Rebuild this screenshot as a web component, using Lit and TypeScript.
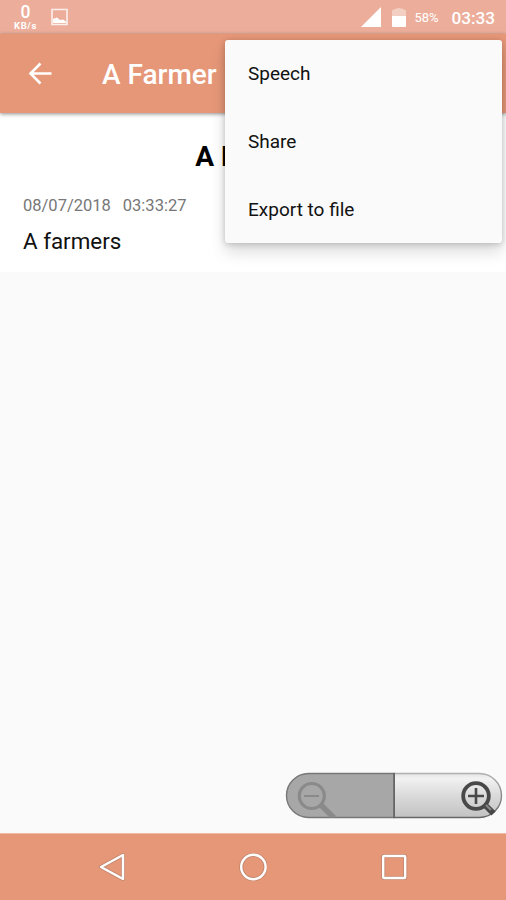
import { LitElement, html, css } from "lit";
import { customElement } from "lit/decorators.js";

@customElement("app-root")
export class AppRoot extends LitElement {
  static styles = css`
    :host { display: flex; flex-direction: column; position: relative; width: 506px; height: 900px; overflow: hidden; background: #fafafa; font-family: Roboto, "Noto Sans", sans-serif; }
    * { box-sizing: border-box; }
    svg { display: block; flex: none; }
    .status { flex: none; height: 34px; background: #ecae9b; color: #fff; display: flex; align-items: center; padding: 0 11px 0 12px; }
    .speed { width: 27px; height: 34px; display: flex; flex-direction: column; align-items: center; padding-top: 4px; }
    .speed b { font-size: 17.5px; line-height: 17px; font-weight: 500; }
    .speed small { font-size: 9.5px; line-height: 9px; font-weight: 700; letter-spacing: .6px; }
    .photo { margin-left: 11px; }
    .signal { margin-left: auto; }
    .battery { margin-left: 11px; }
    .percent { font-size: 13px; letter-spacing: -.1px; margin-left: 9px; line-height: 34px; padding-top: 2px; }
    .clock { font-size: 17.2px; font-weight: 500; margin-left: 13px; line-height: 34px; padding-top: 1px; }
    .bar { flex: none; height: 79px; background: #e69778; color: #fff; display: flex; align-items: center; padding: 2px 0 0 28px; box-shadow: 0 1px 4px rgba(0,0,0,.45); z-index: 1; }
    .back { margin-top: -2px; }
    .bar h1 { margin: 0 0 0 50px; font-size: 28px; font-weight: 500; line-height: 36px; }
    .note { flex: none; height: 159px; background: #fff; padding: 27px 23px 0; color: #111; }
    .note h2 { margin: 0; text-align: center; font-size: 28px; line-height: 34px; font-weight: 700; color: #000; }
    .date { margin-top: 20px; font-size: 16.5px; line-height: 24px; color: #777; display: flex; gap: 12px; }
    .text { margin-top: 9px; font-size: 22.4px; line-height: 28px; }
    .space { flex: 1; display: flex; align-items: flex-end; justify-content: flex-end; padding: 0 3px 14px 0; }
    .nav { flex: none; height: 67px; background: #e69778; border-top: 1px solid #efb9a5; display: flex; justify-content: center; align-items: center; gap: 113px; }
    .menu { position: absolute; z-index: 2; left: 225px; top: 40px; width: 277px; height: 203px; background: #fafafa; border-radius: 3px; box-shadow: 0 9px 16px rgba(0,0,0,.14), 0 1px 6px rgba(0,0,0,.2); color: #111; display: flex; flex-direction: column; }
    .item { flex: 1; display: flex; align-items: center; padding: 0 23px; font-size: 19px; }
  `;

  render() {
    return html`
      <header class="status">
        <div class="speed"><b>0</b><small>KB/s</small></div>
        <svg class="photo" width="19" height="18" viewBox="0 0 19 18"><path d="M2 1.5H17V16.5H2Z" fill="none" stroke="#fff" stroke-opacity=".8" stroke-width="1.6"/><path d="M3 15V11L7 9.5L10 12L13 11.5L16 13.5V15Z" fill="#fff"/></svg>
        <svg class="signal" width="20" height="20" viewBox="0 0 20 20"><path d="M0 20L20 0V20Z" fill="#fff"/></svg>
        <svg class="battery" width="14" height="20" viewBox="0 0 14 20"><path d="M0 9V4Q0 2.5 2 2.5Q4 1 7 1T12 2.5Q14 2.5 14 4V9Z" fill="#fff" fill-opacity=".4"/><path d="M0 9H14V19Q14 20 13 20H1Q0 20 0 19Z" fill="#fff"/></svg>
        <span class="percent">58%</span><span class="clock">03:33</span>
      </header>
      <div class="bar">
        <svg class="back" width="24" height="24" viewBox="0 0 24 24"><path d="M23.5 11.5H3M12.5 1.5L2.5 11.5L12.5 21.5" fill="none" stroke="#fff" stroke-width="2.6"/></svg>
        <h1>A Farmer</h1>
      </div>
      <main class="note">
        <h2>A Farmer</h2>
        <div class="date"><span>08/07/2018</span><span>03:33:27</span></div>
        <div class="text">A farmers</div>
      </main>
      <section class="space">
        <svg width="218" height="47" viewBox="0 0 218 47">
          <defs>
            <linearGradient id="face" x2="0" y2="1"><stop stop-color="#e4e4e4"/><stop offset=".12" stop-color="#f2f2f2"/><stop offset=".5" stop-color="#dadada"/><stop offset="1" stop-color="#c2c2c2"/></linearGradient>
            <linearGradient id="edge" x2="0" y2="1"><stop stop-color="#b0b0b0"/><stop offset="1" stop-color="#666"/></linearGradient>
            <clipPath id="pill"><rect x="1" y="1" width="216" height="44.5" rx="22.2"/></clipPath>
          </defs>
          <path d="M109 1.5H194.5A22 22 0 0 1 194.5 45.5H109Z" fill="url(#face)" stroke="url(#edge)" stroke-width="1.4"/>
          <path d="M109 1.5H23.5A22 22 0 0 0 23.5 45.5H109Z" fill="#a7a7a7" stroke="#777" stroke-width="1.4"/>
          <path d="M109.2 1V46" stroke="#666" stroke-width="1.6"/>
          <g clip-path="url(#pill)" fill="none" stroke="#8a8a8a"><circle cx="26.8" cy="24" r="12.5" stroke-width="3.2"/><path d="M19 24H34" stroke-width="2"/><path d="M36 33L49 46" stroke-width="5.5"/></g>
          <g stroke="#484848" fill="none"><circle cx="191" cy="24" r="12.8" stroke-width="3.8"/><path d="M183 24H199M191 16V32" stroke-width="2.6"/><path d="M200 33L208.5 41.5" stroke-width="6"/></g>
          <path d="M201 33L206 38" stroke="#888" stroke-width="2"/>
        </svg>
      </section>
      <nav class="nav">
        <svg width="28" height="28" viewBox="0 0 28 28"><g fill="none" stroke-linejoin="round"><path d="M25 2V26L3 14Z" stroke="#9c7566" stroke-opacity=".5" stroke-width="4"/><path d="M25 2V26L3 14Z" stroke="#fff" stroke-width="2.4"/></g></svg>
        <svg width="28" height="28" viewBox="0 0 28 28"><g fill="none"><circle cx="14.4" cy="14" r="12.2" stroke="#9c7566" stroke-opacity=".5" stroke-width="4"/><circle cx="14.4" cy="14" r="12.2" stroke="#fff" stroke-width="2.4"/></g></svg>
        <svg width="28" height="28" viewBox="0 0 28 28"><g fill="none"><rect x="3.2" y="3" width="22" height="22" rx="1" stroke="#9c7566" stroke-opacity=".5" stroke-width="4"/><rect x="3.2" y="3" width="22" height="22" rx="1" stroke="#fff" stroke-width="2.4"/></g></svg>
      </nav>
      <div class="menu" role="menu">
        ${["Speech", "Share", "Export to file"].map((label) => html`<div class="item" role="menuitem">${label}</div>`)}
      </div>
    `;
  }
}
